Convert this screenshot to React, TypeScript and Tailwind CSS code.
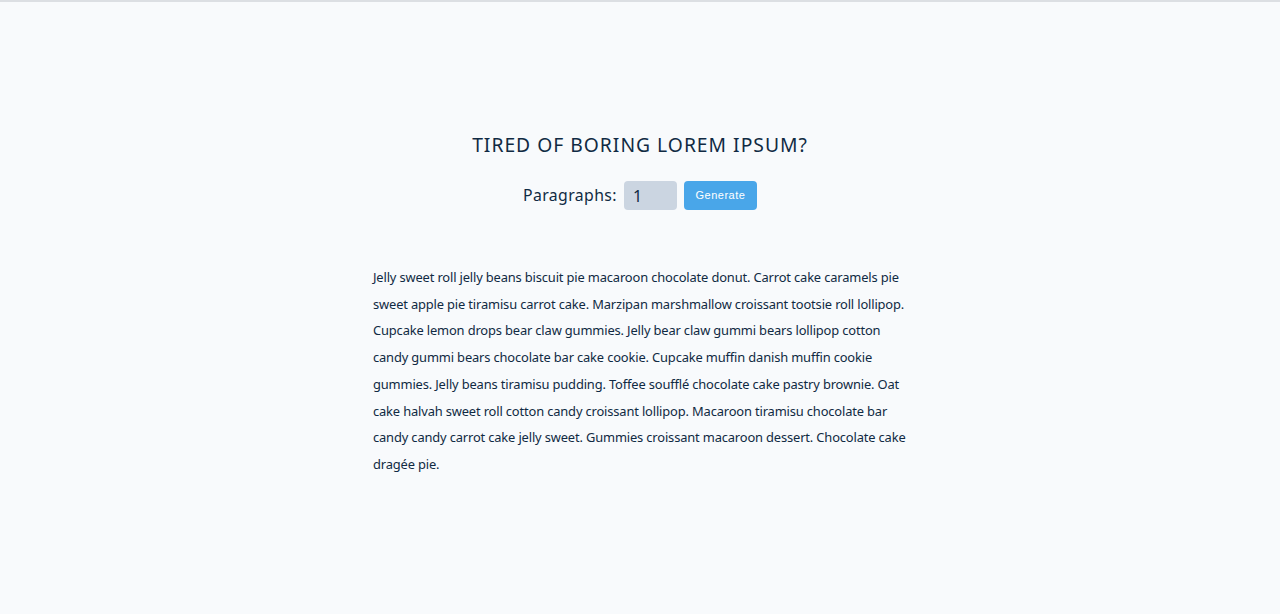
// lines are broken where the reference wraps them
const lines = [
  'Jelly sweet roll jelly beans biscuit pie macaroon chocolate donut. Carrot cake caramels pie',
  'sweet apple pie tiramisu carrot cake. Marzipan marshmallow croissant tootsie roll lollipop.',
  'Cupcake lemon drops bear claw gummies. Jelly bear claw gummi bears lollipop cotton',
  'candy gummi bears chocolate bar cake cookie. Cupcake muffin danish muffin cookie',
  'gummies. Jelly beans tiramisu pudding. Toffee soufflé chocolate cake pastry brownie. Oat',
  'cake halvah sweet roll cotton candy croissant lollipop. Macaroon tiramisu chocolate bar',
  'candy candy carrot cake jelly sweet. Gummies croissant macaroon dessert. Chocolate cake',
  'dragée pie.',
];

export default function App() {
  return (
    <div
      className="min-h-[614px] bg-[#f8fafc] border-t-2 border-[#dcdfe3] text-[#102a43]"
      style={{ fontFamily: '"Noto Sans", sans-serif' }}
    >
      <section className="flex flex-col items-center pt-[128px]">
        <h3 className="text-[19.3px] leading-[30px] tracking-[1px] uppercase">
          tired of boring lorem ipsum?
        </h3>
        <form className="flex items-center mt-[21px]" onSubmit={(e) => e.preventDefault()}>
          <label htmlFor="amount" className="text-[15.8px] tracking-[0.4px] mr-[7px]">
            Paragraphs:
          </label>
          <input
            id="amount"
            type="number"
            defaultValue={1}
            className="w-[53px] h-[29px] bg-[#cbd5e1] rounded-[4px] px-[9px] text-[16px] outline-none"
          />
          <button
            type="submit"
            className="ml-[7px] w-[73px] h-[29px] bg-[#49a6e9] rounded-[4px] text-white text-[11px] tracking-[0.5px]"
            style={{ fontFamily: '"Liberation Sans", sans-serif' }}
          >
            Generate
          </button>
        </form>
        <article className="mt-[54px] w-[540px] pl-[3px] text-[12.9px] tracking-[-0.15px] leading-[26.7px] whitespace-nowrap">
          <p>
            {lines.map((line, i) => (
              <span key={i} className="block">
                {line}
              </span>
            ))}
          </p>
        </article>
      </section>
    </div>
  );
}
